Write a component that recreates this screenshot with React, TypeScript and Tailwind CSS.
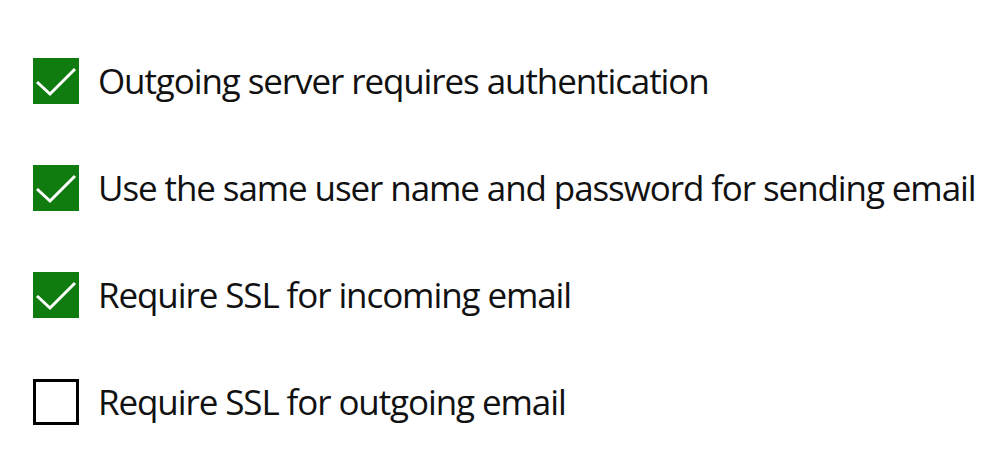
import React from "react";

const options = [
  { label: "Outgoing server requires authentication", checked: true },
  { label: "Use the same user name and password for sending email", checked: true },
  { label: "Require SSL for incoming email", checked: true },
  { label: "Require SSL for outgoing email", checked: false },
];

function Checkbox({ checked }: { checked: boolean }) {
  if (checked) {
    return (
      <div className="w-[46px] h-[46px] bg-[#107c10] shrink-0">
        <svg width="46" height="46" viewBox="0 0 46 46" fill="none">
          <path d="M4 24 L17 36 L42 11" stroke="#ffffff" strokeWidth="3" />
        </svg>
      </div>
    );
  }
  return <div className="w-[46px] h-[46px] border-[3px] border-black bg-white shrink-0" />;
}

export default function App() {
  return (
    <div className="w-[1000px] h-[452px] bg-white pt-[58px] pl-[33px] font-['Open_Sans',sans-serif]">
      <div className="flex flex-col gap-[61px]">
        {options.map((o) => (
          <div key={o.label} className="flex items-center gap-[19px] h-[46px]">
            <Checkbox checked={o.checked} />
            <span className="text-[35px] text-[#111] whitespace-nowrap tracking-[-1.1px]">{o.label}</span>
          </div>
        ))}
      </div>
    </div>
  );
}
